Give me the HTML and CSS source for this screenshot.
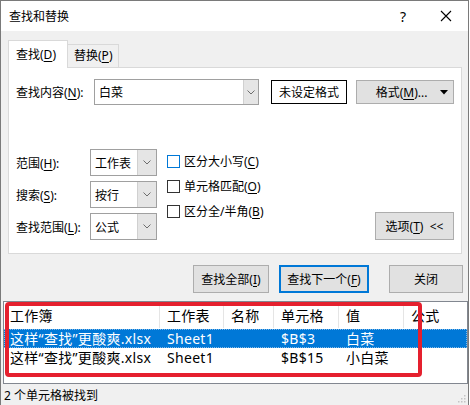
FILE: index.html
```html
<!DOCTYPE html>
<html lang="zh-CN">
    <head>
        <meta charset="UTF-8">
        <meta name="viewport" content="width=device-width, initial-scale=1.0">
        <title>查找和替换</title>
        <link rel="stylesheet" href="styles.css">
    </head>
    <body>
        <div class="window">
            <div class="titlebar">
                <span class="title">查找和替换</span>
                <span class="help">?</span>
                <svg class="close" width="12" height="12" viewBox="0 0 12 12">
                    <path d="M1 1 L11 11 M11 1 L1 11" stroke="#000" stroke-width="1.1" fill="none"/>
                </svg>
            </div>

            <div class="client">
                <div class="tabs">
                    <div class="tab active">查找(<u>D</u>)</div>
                    <div class="tab">替换(<u>P</u>)</div>
                </div>

                <div class="panel">
                    <div class="find-row">
                        <span class="find-label">查找内容(<u>N</u>):</span>
                        <div class="combo find-combo">
                            <span class="combo-text">白菜</span>
                            <span class="combo-arrow">
                                <svg width="8" height="5" viewBox="0 0 8 5"><path d="M0.5 0.5 L4 4 L7.5 0.5" stroke="#6d6d6d" fill="none"/></svg>
                            </span>
                        </div>
                        <div class="preview">未设定格式</div>
                        <div class="btn format-btn">
                            <span class="format-text">格式(<u>M</u>)...</span>
                            <svg width="8" height="5" viewBox="0 0 8 5"><path d="M0 0 L8 0 L4 4.5 Z" fill="#000"/></svg>
                        </div>
                    </div>

                    <div class="options">
                        <div class="selects">
                            <div class="sel-row">
                                <span class="sel-label">范围(<u>H</u>):</span>
                                <div class="combo sel-combo">
                                    <span class="combo-text">工作表</span>
                                    <span class="combo-arrow">
                                        <svg width="8" height="5" viewBox="0 0 8 5"><path d="M0.5 0.5 L4 4 L7.5 0.5" stroke="#6d6d6d" fill="none"/></svg>
                                    </span>
                                </div>
                            </div>
                            <div class="sel-row">
                                <span class="sel-label">搜索(<u>S</u>):</span>
                                <div class="combo sel-combo">
                                    <span class="combo-text">按行</span>
                                    <span class="combo-arrow">
                                        <svg width="8" height="5" viewBox="0 0 8 5"><path d="M0.5 0.5 L4 4 L7.5 0.5" stroke="#6d6d6d" fill="none"/></svg>
                                    </span>
                                </div>
                            </div>
                            <div class="sel-row">
                                <span class="sel-label">查找范围(<u>L</u>):</span>
                                <div class="combo sel-combo">
                                    <span class="combo-text">公式</span>
                                    <span class="combo-arrow">
                                        <svg width="8" height="5" viewBox="0 0 8 5"><path d="M0.5 0.5 L4 4 L7.5 0.5" stroke="#6d6d6d" fill="none"/></svg>
                                    </span>
                                </div>
                            </div>
                        </div>

                        <div class="checks">
                            <div class="check"><span class="box focused"></span>区分大小写(<u>C</u>)</div>
                            <div class="check"><span class="box"></span>单元格匹配(<u>O</u>)</div>
                            <div class="check"><span class="box"></span>区分全/半角(<u>B</u>)</div>
                        </div>

                        <div class="btn options-btn">选项(<u>T</u>)&nbsp; &lt;&lt;</div>
                    </div>
                </div>

                <div class="actions">
                    <div class="btn find-all">查找全部(<u>I</u>)</div>
                    <div class="btn find-next">查找下一个(<u>F</u>)</div>
                    <div class="btn close-btn">关闭</div>
                </div>

                <div class="results">
                    <div class="row head">
                        <span class="cell first">工作簿</span>
                        <span class="cell">工作表</span>
                        <span class="cell">名称</span>
                        <span class="cell">单元格</span>
                        <span class="cell">值</span>
                        <span class="cell">公式</span>
                    </div>
                    <div class="row selected">
                        <span class="cell first">这样“查找”更酸爽.xlsx</span>
                        <span class="cell">Sheet1</span>
                        <span class="cell"></span>
                        <span class="cell">$B$3</span>
                        <span class="cell">白菜</span>
                        <span class="cell"></span>
                    </div>
                    <div class="row">
                        <span class="cell first">这样“查找”更酸爽.xlsx</span>
                        <span class="cell">Sheet1</span>
                        <span class="cell"></span>
                        <span class="cell">$B$15</span>
                        <span class="cell">小白菜</span>
                        <span class="cell"></span>
                    </div>
                    <div class="highlight"></div>
                </div>

                <div class="status">
                    <span>2 个单元格被找到</span>
                    <svg class="grip" width="8" height="8" viewBox="0 0 8 8">
                        <rect x="6" y="0" width="1.5" height="1.5" fill="#c4c4c4"/>
                        <rect x="3" y="3" width="1.5" height="1.5" fill="#c4c4c4"/>
                        <rect x="6" y="3" width="1.5" height="1.5" fill="#c4c4c4"/>
                        <rect x="0" y="6" width="1.5" height="1.5" fill="#c4c4c4"/>
                        <rect x="3" y="6" width="1.5" height="1.5" fill="#c4c4c4"/>
                        <rect x="6" y="6" width="1.5" height="1.5" fill="#c4c4c4"/>
                    </svg>
                </div>
            </div>
        </div>
    </body>
</html>
```

FILE: styles.css
```css
body {
    margin: 0;
    background: #fff;
    font-family: "Noto Sans", "Noto Sans CJK SC", sans-serif;
    font-size: 12px;
    color: #000;
}
u { text-decoration-thickness: 1px; text-underline-offset: 2px; }

.window {
    width: 469px;
    height: 405px;
    box-sizing: border-box;
    border: 1px solid #7a7a7a;
    border-bottom: none;
    display: flex;
    flex-direction: column;
}

/* title bar */
.titlebar {
    height: 30px;
    flex: none;
    display: flex;
    align-items: center;
    padding-left: 8px;
    background: #fff;
}
.title { font-size: 12px; flex: 1; }
.help { font-size: 14px; margin-right: 34px; }
.close { margin-right: 16px; }

.client {
    flex: 1;
    background: #f0f0f0;
    padding-top: 9px;
    display: flex;
    flex-direction: column;
    position: relative;
}

/* tabs */
.tabs {
    display: flex;
    align-items: flex-end;
    margin-left: 7px;
    height: 27px;
    position: relative;
    z-index: 1;
}
.tab {
    box-sizing: border-box;
    height: 23px;
    line-height: 22px;
    padding: 0 6px;
    border: 1px solid #d9d9d9;
    border-bottom: none;
    border-left: none;
    background: #f0f0f0;
}
.tab.active {
    height: 28px;
    line-height: 28px;
    padding: 0 7px;
    width: 60px;
    border-left: 1px solid #d9d9d9;
    background: #fff;
    margin-bottom: -1px;
}

.panel {
    box-sizing: border-box;
    margin-left: 7px;
    width: 454px;
    height: 187px;
    border: 1px solid #d9d9d9;
    background: #fff;
    padding: 11px 7px 0 7px;
    display: flex;
    flex-direction: column;
}

.find-row {
    display: flex;
    align-items: center;
    height: 26px;
}
.find-label { width: 78px; }

.combo {
    box-sizing: border-box;
    display: flex;
    border: 1px solid #a0a0a0;
    background: #fff;
}
.combo-text { flex: 1; padding-left: 4px; display: flex; align-items: center; }
.combo-arrow {
    display: flex;
    align-items: center;
    justify-content: center;
    background: #e5e5e5;
    border-left: 1px solid #d0d0d0;
}
.find-combo { width: 165px; height: 26px; }
.find-combo .combo-arrow { width: 14px; }

.preview {
    box-sizing: border-box;
    width: 76px;
    height: 24px;
    margin-left: 12px;
    border: 1px solid #000;
    display: flex;
    align-items: center;
    justify-content: center;
}

.btn {
    box-sizing: border-box;
    background: #e1e1e1;
    border: 1px solid #adadad;
    display: flex;
    align-items: center;
    justify-content: center;
}
.format-btn {
    width: 98px;
    height: 24px;
    margin-left: 9px;
    padding-right: 5px;
}
.format-text { flex: 1; text-align: center; padding-left: 6px; }

/* search options */
.options {
    display: flex;
    margin-top: 44px;
    height: 92px;
}
.selects {
    display: flex;
    flex-direction: column;
    gap: 5px;
}
.sel-row { display: flex; align-items: center; }
.sel-label { width: 74px; }
.sel-combo { width: 67px; height: 27px; }
.sel-combo .combo-text { padding-left: 4px; }
.sel-combo .combo-arrow { width: 18px; }

.checks {
    display: flex;
    flex-direction: column;
    gap: 7px;
    margin-left: 10px;
    margin-top: 3px;
}
.check { display: flex; align-items: center; height: 18px; }
.box {
    box-sizing: border-box;
    width: 13px;
    height: 13px;
    border: 1px solid #333;
    margin-right: 4px;
    background: #fff;
}
.box.focused { border-color: #0078d7; }

.options-btn {
    margin-left: auto;
    align-self: flex-end;
    margin-bottom: 1px;
    width: 79px;
    height: 28px;
}

/* bottom buttons */
.actions {
    display: flex;
    justify-content: flex-end;
    margin-top: 11px;
    padding-right: 5px;
    height: 28px;
}
.actions .btn { height: 28px; }
.find-all { width: 76px; }
.find-next { width: 90px; margin-left: 10px; border: 2px solid #0078d7; }
.close-btn { width: 74px; margin-left: 20px; }

/* result list */
.results {
    position: relative;
    box-sizing: border-box;
    margin-top: 8px;
    margin-left: 2px;
    width: 465px;
    height: 83px;
    border: 1px solid #828790;
    background: #fff;
    font-size: 14px;
    letter-spacing: 0.3px;
}
.row {
    display: grid;
    grid-template-columns: 156px 64px 50px 65px 65px 1fr;
    height: 19px;
    line-height: 19px;
    white-space: nowrap;
}
.row .cell { padding-left: 7px; overflow: hidden; }
.row .cell.first { padding-left: 6px; }
.row.head { height: 27px; line-height: 28px; }
.row.head .cell { border-right: 1px solid #e5e5e5; margin: 2px 0 1px; line-height: 24px; }
.row.head .cell:last-child { border-right: none; }
.row.selected {
    background: #0078d7;
    color: #fff;
    outline: 1px dotted #7fb9ea;
    outline-offset: -1px;
}

.highlight {
    position: absolute;
    left: 1px;
    top: 0;
    width: 417px;
    height: 75px;
    box-sizing: border-box;
    border: 4px solid #e5202e;
    border-radius: 4px;
}

.status {
    flex: 1;
    display: flex;
    align-items: center;
    padding-left: 3px;
    position: relative;
}
.grip { position: absolute; right: 2px; bottom: 2px; }
```
